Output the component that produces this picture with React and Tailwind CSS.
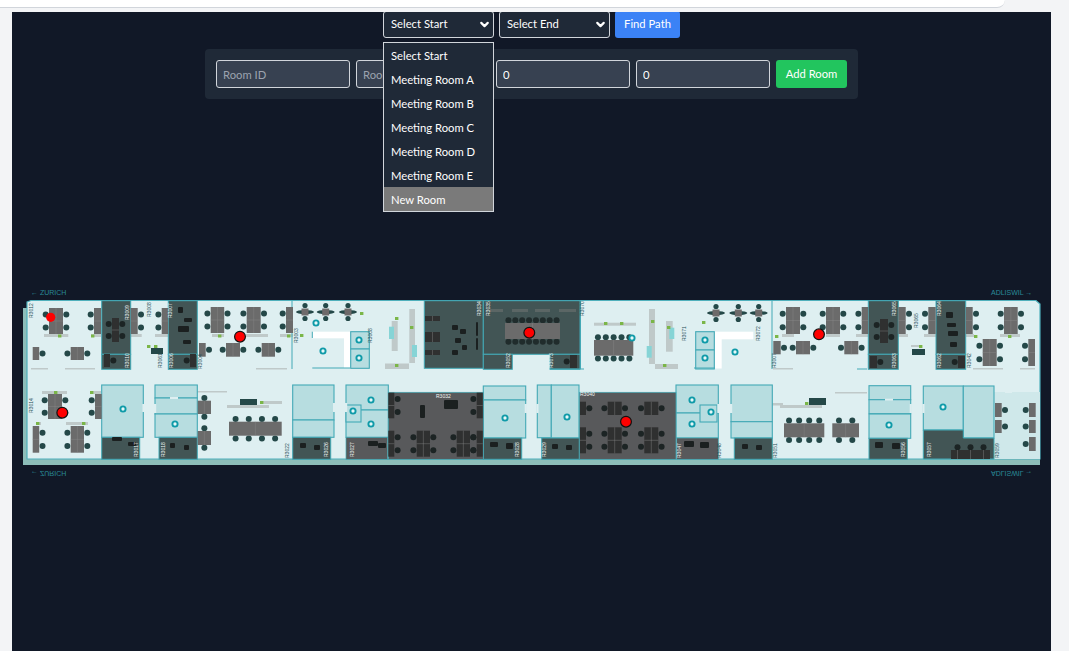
import { ChevronDown } from "lucide-react";

const OPTIONS = ["Select Start", "Meeting Room A", "Meeting Room B", "Meeting Room C", "Meeting Room D", "Meeting Room E", "New Room"];

// everything in the plan is in page pixels, the viewBox starts at 22,285
const GREEN_ROOMS = [
	[101.7, 300.7, 29, 53.6], [101.7, 354.3, 29, 15], [168.3, 300.7, 29, 53.6], [168.3, 354.3, 29, 15],
	[424.3, 300.7, 59, 67.6], [483.3, 300.7, 96.7, 53.6], [483.3, 354.3, 29, 15], [550, 354.3, 30, 15],
	[868.3, 300.7, 30, 53.6], [868.3, 354.3, 30, 15], [936, 300.7, 29.7, 53.6], [936, 354.3, 29.7, 15],
	[101.7, 437.3, 38, 22], [159, 437.3, 38.3, 22], [292.7, 437.3, 38, 22], [483.3, 438, 38.4, 21.3],
	[541.7, 438, 37.6, 21.3], [734.3, 438, 38, 21.3], [869, 438.3, 38.3, 21],
];
const GRAY_ROOMS = [
	[346, 437.3, 41.7, 22], [388.3, 392.3, 95, 67], [579.3, 392.3, 96.7, 67], [676.7, 438, 41.6, 21.3],
];
const LIGHT_ROOMS = [
	[101.7, 385, 41.6, 52.3], [155, 385, 42.3, 13], [155, 398, 42.3, 16], [155, 414, 42.3, 23.3],
	[292.7, 385, 41.3, 35], [292.7, 420, 41.3, 17.3], [346, 385, 42.3, 25], [346, 410, 42.3, 27.3],
	[483.3, 386, 42.4, 14], [483.3, 400, 42.4, 38], [537.3, 385, 14, 52.7], [551.3, 385, 27.7, 53],
	[676, 385, 42.3, 28], [676, 413, 42.3, 25], [731, 385, 41.3, 36.7], [731, 421.7, 41.3, 16.3],
	[869, 385.7, 41.7, 14], [869, 399.7, 41.7, 14], [869, 414, 41.7, 24.3], [923.3, 386, 40, 44],
	[963.3, 386, 30.7, 52], [350.7, 331.7, 18.6, 17.3], [350.7, 349, 18.6, 19.3], [695.7, 331.7, 18.6, 18.3],
	[695.7, 350, 18.6, 19], [346, 405, 15, 17], [700, 405, 17, 17],
];
const STRIPS = [
	[44, 334, 24.3, 3], [91, 334, 10, 3], [130.7, 334, 11, 3], [155, 334, 13, 3], [31, 368, 17, 1.5], [65, 368, 30, 1.5],
	[212, 334, 12, 3], [246, 334, 22, 3], [280, 334, 13, 3], [256, 368, 31, 1.5], [42, 391, 25, 3], [90, 391, 11, 3],
	[36, 422, 5, 3], [66, 422, 22, 3], [197, 391, 30, 1.5], [227, 405, 42, 3], [263, 401, 19, 3],
	[409.3, 309, 5.7, 54], [391.7, 321, 6, 30], [385, 363.5, 24, 5.5], [649, 309, 6, 55], [666, 321, 6.7, 30.7], [655, 364, 23, 5],
	[594, 322.7, 42, 3], [782, 334, 12, 3], [826, 334, 14, 3], [856, 334, 12, 3], [898, 334, 10, 3], [924, 334, 12, 3], [966, 334, 8, 3], [1000, 334, 20, 3],
	[773, 368, 20, 1.5], [973, 368, 30, 1.5], [1020, 368, 15, 1.5], [780, 405, 42, 3], [770, 403, 13, 2.5], [835, 392, 32, 1.5], [911, 345, 8, 2],
];
const TURQUOISE = [[389, 326.7, 5, 12.3], [412, 345, 5, 12], [646.7, 346, 5, 11.7], [669.3, 327.7, 5, 11.3]];
const WHITE = [[312.3, 331.7, 38.4, 6.6], [344, 338, 6.5, 30], [715, 331.7, 38.3, 7.6], [715, 339, 6.7, 29.5]];
const DOOR_GAPS = [
	[142.3, 404, 2.2, 8], [154, 404, 2.2, 9], [333, 403, 2.2, 9], [345, 403, 2.2, 9], [524.7, 404, 2.2, 9], [536.3, 404, 2.2, 9],
	[717.3, 404, 2.2, 9], [730, 404, 2.2, 9], [909.7, 404, 2.2, 9], [922.3, 404, 2.2, 9], [170, 397, 8, 2], [885, 398.7, 8, 2], [1005, 391, 7, 2],
];
const PLANTS = [
	[58, 334.5], [91, 334.5], [218, 334.5], [287, 334.5], [54, 391], [90, 391], [36, 422], [82, 422], [260, 401],
	[147, 345], [154, 345], [300, 334], [360, 312], [395, 317], [410, 326], [395, 364], [604, 322], [620, 322],
	[651, 320], [667, 326], [663, 364], [702, 321], [775, 335], [805, 402], [919, 345], [974, 335], [1008, 335],
];
const DESKS = [
	{ x: 49, y: 308, w: 14, h: 26, s: "lr" }, { x: 94, y: 308, w: 7, h: 26, s: "l" }, { x: 130.7, y: 308, w: 7, h: 26, s: "r" },
	{ x: 161.7, y: 308, w: 6.5, h: 26, s: "l" }, { x: 210.7, y: 307, w: 13.5, h: 26, s: "lr" }, { x: 246.7, y: 307, w: 14, h: 26, s: "lr" },
	{ x: 286, y: 307, w: 7, h: 26, s: "l" }, { x: 32.7, y: 347, w: 6.5, h: 13, s: "r" }, { x: 70.7, y: 347, w: 13.3, h: 13, s: "lr" },
	{ x: 199, y: 343, w: 6.7, h: 13.7, s: "r" }, { x: 226, y: 343, w: 14, h: 13.7, s: "lr" }, { x: 261.7, y: 343, w: 13.3, h: 13.7, s: "lr" },
	{ x: 48, y: 394, w: 14, h: 25, s: "lr" }, { x: 95, y: 394, w: 6.7, h: 25, s: "l" }, { x: 32.7, y: 426, w: 6.5, h: 26.7, s: "r" },
	{ x: 70.7, y: 426, w: 13.3, h: 26.7, s: "lr" }, { x: 197.7, y: 400.7, w: 13.3, h: 13.3, s: "tb", n: 1 }, { x: 197.7, y: 431, w: 13.3, h: 14, s: "tb", n: 1 },
	{ x: 229, y: 421.7, w: 52.7, h: 14, s: "tb", n: 4 }, { x: 594, y: 340, w: 39.3, h: 15.7, s: "tb", n: 5 },
	{ x: 786, y: 307, w: 14, h: 27, s: "lr" }, { x: 826, y: 307, w: 14, h: 27, s: "lr" }, { x: 861.7, y: 307, w: 6.6, h: 27, s: "l" },
	{ x: 898.3, y: 307, w: 7.4, h: 27, s: "r" }, { x: 928.3, y: 307, w: 7.4, h: 27, s: "l" }, { x: 965.7, y: 307, w: 7, h: 27, s: "r" },
	{ x: 1004, y: 307, w: 13.7, h: 27, s: "lr" }, { x: 796, y: 341, w: 14, h: 13.3, s: "lr" }, { x: 844.3, y: 341, w: 14, h: 13.3, s: "lr" },
	{ x: 982.7, y: 339, w: 14, h: 27, s: "lr" }, { x: 1028.3, y: 339, w: 6.7, h: 27, s: "l" }, { x: 773.3, y: 341, w: 7.4, h: 13.3, s: "r" },
	{ x: 995, y: 403, w: 6.7, h: 14, s: "r" }, { x: 995, y: 420, w: 6.7, h: 13, s: "r" }, { x: 1029, y: 403, w: 6.7, h: 14, s: "l" },
	{ x: 1029, y: 420, w: 6.7, h: 13, s: "l" }, { x: 1029, y: 437, w: 6.7, h: 14, s: "l" },
	{ x: 784, y: 423.3, w: 40.3, h: 14, s: "tb", n: 4 }, { x: 832.3, y: 423.3, w: 26.7, h: 14, s: "tb", n: 2 },
	{ x: 505, y: 323, w: 55, h: 16, s: "tb", n: 8, c: "#202c2c" },
];
const DARK_DESKS = [
	{ x: 416.7, y: 430.7, w: 13.3, h: 26, s: "lr" }, { x: 456.7, y: 430.7, w: 13.3, h: 26, s: "lr" },
	{ x: 388.3, y: 392.7, w: 6, h: 25.6, s: "r" }, { x: 388.3, y: 430.7, w: 6, h: 26, s: "r" },
	{ x: 476.7, y: 392.7, w: 6, h: 25.6, s: "l" }, { x: 476.7, y: 430.7, w: 6, h: 26, s: "l" },
	{ x: 607.7, y: 401.7, w: 14, h: 13.3, s: "lr" }, { x: 644.3, y: 401.7, w: 14, h: 13.3, s: "lr" },
	{ x: 607.7, y: 427.3, w: 14, h: 26, s: "lr" }, { x: 644.3, y: 427.3, w: 14, h: 26, s: "lr" },
	{ x: 580, y: 401.7, w: 6, h: 13.3, s: "r" }, { x: 580, y: 427.3, w: 6, h: 26, s: "r" },
	{ x: 951, y: 450, w: 13, h: 9, s: "t" }, { x: 964, y: 450, w: 13, h: 9, s: "t" }, { x: 977, y: 450, w: 13, h: 9, s: "t" },
	{ x: 104, y: 354, w: 6, h: 13, s: "r" }, { x: 190, y: 354, w: 6, h: 13, s: "l" }, { x: 570, y: 355, w: 7, h: 13, s: "l" },
	{ x: 870, y: 356, w: 7, h: 12, s: "r" }, { x: 958, y: 356, w: 7, h: 12, s: "l" },
	{ x: 112, y: 318, w: 7, h: 24, s: "lr" }, { x: 880, y: 319, w: 8, h: 24, s: "lr" },
	{ x: 425, y: 316, w: 15, h: 5, s: "" }, { x: 425, y: 332, w: 15, h: 10, s: "" }, { x: 425, y: 350, w: 15, h: 5, s: "" },
];
const ROOM_BARS = [[490, 309, 13, 3], [512, 309, 16, 3], [535, 309, 15, 3], [559, 309, 17, 3]];
const LOUNGES = [[305, 312], [325.7, 312], [348, 312], [716, 313], [738.3, 313], [758.7, 313]];
const ICONS = [
	[123, 409], [175, 424], [316, 323], [323, 351], [359, 340], [359, 358], [371, 400], [353, 411], [371, 424], [505, 418],
	[632, 338], [705, 340], [705, 358], [735, 352], [692, 400], [711, 412], [692, 424], [567, 417], [889, 425], [943, 407],
];
const BLACK_BITS = [
	[112, 437, 10, 4], [128, 442, 8, 4], [170, 443, 5, 5], [184, 445, 5, 5], [300, 443, 6, 5], [314, 445, 6, 5], [368, 441, 10, 5], [378, 443, 8, 5],
	[490, 442, 8, 5], [506, 443, 7, 6], [552, 444, 6, 5], [566, 445, 6, 5], [684, 441, 10, 6], [700, 442, 9, 6], [742, 444, 6, 5], [756, 445, 6, 5], [875, 442, 8, 6], [892, 443, 8, 6],
	[452, 325, 6, 5], [460, 329, 6, 5], [455, 338, 6, 5], [452, 350, 6, 5], [462, 345, 5, 5], [476, 322, 2, 14], [476, 338, 2, 12],
	[178, 307, 5, 6], [184, 318, 8, 4], [178, 326, 11, 6], [183, 340, 8, 4], [946, 312, 7, 6], [947, 323, 9, 4], [948, 331, 10, 5], [950, 342, 7, 5],
	[420, 405, 5, 13], [444, 400, 14, 9],
];
const LABELS = [
	[33, 318, "R3012", "#1f4d55"], [33, 413, "R3014", "#1f4d55"], [129, 320, "R3009"], [151, 317, "R3008", "#1f4d55"], [172, 318, "R3007"],
	[129, 368, "R3010"], [173, 368, "R3006"], [162, 368, "R3061", "#1f4d55"], [202, 369, "R3004", "#1f4d55"], [138, 457, "R3017"], [165, 457, "R3018"],
	[298, 343, "R3003", "#1f4d55"], [372, 343, "R3008", "#1f4d55"], [481, 316, "R3034"], [490, 316, "R3035"], [510, 368, "R3052"],
	[289, 458, "R3022", "#1f4d55"], [328, 457, "R3026"], [354, 457, "R3027"], [519, 457, "R3028"], [546, 457, "R3029"], [553, 368, "R3073"],
	[584, 316, "R3070", "#1f4d55"], [686, 341, "R3071", "#1f4d55"], [760, 341, "R3072", "#1f4d55"], [776, 368, "R3007", "#1f4d55"],
	[681, 458, "R3047"], [721, 458, "R3048", "#1f4d55"], [777, 458, "R3051", "#1f4d55"], [896, 316, "R3065"], [896, 368, "R3063"], [918, 328, "R3065", "#1f4d55"],
	[941, 316, "R3064"], [941, 368, "R3062"], [971, 368, "R3042", "#1f4d55"], [905, 457, "R3056"], [931, 457, "R3057"], [999, 458, "R3059", "#1f4d55"],
];

let Desk = ({ x, y, w, h, s, n, c, fill = "#6b6b6b" }) => {
	let chair = c || "#244848";
	let count = n || (h > 20 ? 2 : 1);
	let spots = [];
	for (let i = 0; i < count; i++) {
		let ty = y + (h * (i + 0.5)) / count;
		let tx = x + (w * (i + 0.5)) / count;
		if (s.includes("l")) spots.push([x - 3.3, ty]);
		if (s.includes("r")) spots.push([x + w + 3.3, ty]);
		if (s.includes("t")) spots.push([tx, y - 2.8]);
		if (s.includes("b")) spots.push([tx, y + h + 2.8]);
	}
	return (
		<g>
			{spots.map(([cx, cy], i) => <circle key={i} cx={cx} cy={cy} r="3" fill={chair} />)}
			<rect x={x} y={y} width={w} height={h} fill={fill} />
			{w > 10 && <line x1={x + w / 2} x2={x + w / 2} y1={y} y2={y + h} stroke="#8a8a8a" strokeWidth="0.4" />}
			{h > 20 && <line x1={x} x2={x + w} y1={y + h / 2} y2={y + h / 2} stroke="#8a8a8a" strokeWidth="0.4" />}
		</g>
	);
};

let Lounge = ({ x, y }) => (
	<g>
		<ellipse cx={x} cy={y} rx="9" ry="2" fill="#244848" />
		<circle cx={x} cy={y - 6.5} r="2.6" fill="#244848" />
		<circle cx={x} cy={y + 6.5} r="2.6" fill="#244848" />
		<rect x={x - 3.5} y={y - 3.5} width="7" height="7" fill="#6e6a6a" />
	</g>
);

let FloorPlan = () => (
	<svg viewBox="22 285 1020 195" className="block w-[1020px] h-[195px] ml-[10px] mt-[186px]">
		<path d="M23 308H27V459H1040V465H23Z" fill="#8dbdb9" />
		<path d="M27 302L31 300.5H1036L1040 304V459H27Z" fill="#deeff1" stroke="#4fb0bc" strokeWidth="1.2" />
		<rect x="994" y="392" width="46" height="67" fill="#cfe8ea" />
		{STRIPS.map(([x, y, w, h], i) => <rect key={i} x={x} y={y} width={w} height={h} fill="#bfc9c9" />)}
		{WHITE.map(([x, y, w, h], i) => <rect key={i} x={x} y={y} width={w} height={h} fill="#ffffff" />)}
		{TURQUOISE.map(([x, y, w, h], i) => <rect key={i} x={x} y={y} width={w} height={h} fill="#86d4d6" />)}
		{LIGHT_ROOMS.map(([x, y, w, h], i) => <rect key={i} x={x} y={y} width={w} height={h} fill="#b7dde0" stroke="#43a9b6" strokeWidth="1.1" />)}
		{DOOR_GAPS.map(([x, y, w, h], i) => <rect key={i} x={x} y={y} width={w} height={h} fill="#deeff1" />)}
		{GREEN_ROOMS.map(([x, y, w, h], i) => <rect key={i} x={x} y={y} width={w} height={h} fill="#425555" stroke="#43a9b6" strokeWidth="1" />)}
		{GRAY_ROOMS.map(([x, y, w, h], i) => <rect key={i} x={x} y={y} width={w} height={h} fill="#58595b" stroke="#43a9b6" strokeWidth="0.7" />)}
		<path d="M923.3 430H963.3V438H994V459H923.3Z" fill="#425555" stroke="#43a9b6" strokeWidth="1" />
		{ROOM_BARS.map(([x, y, w, h], i) => <rect key={i} x={x} y={y} width={w} height={h} fill="#5b6665" />)}
		<path d="M312.3 331.7V338M312.3 368H350M292 300.7V369M580.5 300.7V369M772 300.7V369M694 368H715M550 369H584M857 369H867" stroke="#43a9b6" strokeWidth="1" fill="none" />
		{DESKS.map((d, i) => <Desk key={i} {...d} />)}
		{DARK_DESKS.map((d, i) => <Desk key={i} {...d} fill="#2f3030" c="#1c2424" />)}
		{BLACK_BITS.map(([x, y, w, h], i) => <rect key={i} x={x} y={y} width={w} height={h} rx="1" fill="#1b2020" />)}
		{LOUNGES.map(([x, y], i) => <Lounge key={i} x={x} y={y} />)}
		{PLANTS.map(([x, y], i) => <rect key={i} x={x} y={y} width="3.4" height="3" fill="#7ab648" />)}
		{ICONS.map(([x, y], i) => <circle key={i} cx={x} cy={y} r="2.6" fill="#e6f8f8" stroke="#0f9aa8" strokeWidth="1.9" />)}
		<rect x="151" y="348" width="12" height="6" fill="#244848" />
		<rect x="240" y="399" width="17" height="6" fill="#244848" />
		<rect x="809" y="398" width="17" height="7" fill="#244848" />
		<rect x="912" y="349" width="13" height="6" fill="#244848" />
		{LABELS.map(([x, y, t, c], i) => (
			<text key={i} x={x} y={y} transform={`rotate(-90 ${x} ${y})`} fontSize="5" fill={c || "#f2f5f5"} fontFamily="'Liberation Sans', sans-serif">{t}</text>
		))}
		<text x="436" y="398" fontSize="5" fill="#f2f5f5" fontFamily="'Liberation Sans', sans-serif">R3032</text>
		<text x="580" y="396" fontSize="5" fill="#f2f5f5" fontFamily="'Liberation Sans', sans-serif">R3040</text>
		<text x="31" y="294.5" fontSize="7" fill="#2a8a98" fontFamily="'Liberation Sans', sans-serif">← ZURICH</text>
		<text x="991" y="294.5" fontSize="7" fill="#2a8a98" fontFamily="'Liberation Sans', sans-serif">ADLISWIL →</text>
		<text x="31" y="-471" transform="scale(1 -1)" fontSize="7" fill="#2a8a98" fontFamily="'Liberation Sans', sans-serif">← ZURICH</text>
		<text x="991" y="-471" transform="scale(1 -1)" fontSize="7" fill="#2a8a98" fontFamily="'Liberation Sans', sans-serif">ADLISWIL →</text>
		<circle cx="50.7" cy="317.3" r="4.6" fill="#ff0000" />
		{[[62.3, 412.7], [240, 336.7], [529.3, 332.7], [626, 421.7], [819, 334.3]].map(([cx, cy], i) => (
			<circle key={i} cx={cx} cy={cy} r="5.4" fill="#ff0000" stroke="#111111" strokeWidth="1.2" />
		))}
	</svg>
);

let RouteSelect = ({ label }) => (
	<div className="relative w-[111px] h-[27px] rounded-[3px] border border-[#d1d5db] bg-[#1f2937] text-white flex items-center justify-between pl-[7px] pr-[2px]">
		<span>{label}</span>
		<ChevronDown size={13} strokeWidth={4} />
	</div>
);

export default function App() {
	return (
		<div className="h-screen overflow-hidden bg-[#f3f4f6] flex flex-col text-[11.25px] font-['Lato',sans-serif]">
			<div className="h-[8px] shrink-0 mr-[64px] bg-white border-b border-[#d1d5db] rounded-br-xl" />
			<div className="h-[4px] shrink-0" />
			<main className="relative ml-[12px] w-[1039px] flex-1 bg-[#111827] overflow-hidden">
				<div className="-mt-px flex justify-center gap-[5px]">
					<div className="relative">
						<RouteSelect label="Select Start" />
						<ul className="absolute z-10 left-0 top-[31px] w-[111px] border border-[#d1d5db] bg-[#1f2937] text-white whitespace-nowrap">
							{OPTIONS.map((o) => (
								<li key={o} className={o === "New Room" ? "h-[24px] flex items-center px-[7px] pt-[2px] bg-[#7a7a7a]" : "h-[24px] flex items-center px-[7px] pt-[2px]"}>{o}</li>
							))}
						</ul>
					</div>
					<RouteSelect label="Select End" />
					<button className="w-[65px] h-[27px] rounded-[3px] bg-[#3b82f6] text-white">Find Path</button>
				</div>
				<div className="mt-[11px] mx-auto w-[653px] h-[50px] rounded bg-[#1f2937] flex items-center gap-[6px] pl-[11px]">
					<input placeholder="Room ID" className="w-[134px] h-[28px] rounded-[3px] border border-[#d1d5db] bg-[#374151] text-white px-[6px] placeholder:text-[#9ca3af]" />
					<input placeholder="Room Name" className="w-[134px] h-[28px] rounded-[3px] border border-[#d1d5db] bg-[#374151] text-white px-[6px] placeholder:text-[#9ca3af]" />
					<input defaultValue="0" className="w-[134px] h-[28px] rounded-[3px] border border-[#d1d5db] bg-[#374151] text-white px-[6px]" />
					<input defaultValue="0" className="w-[134px] h-[28px] rounded-[3px] border border-[#d1d5db] bg-[#374151] text-white px-[6px]" />
					<button className="w-[71px] h-[28px] rounded-[3px] bg-[#22c55e] text-white">Add Room</button>
				</div>
				<FloorPlan />
			</main>
		</div>
	);
}
